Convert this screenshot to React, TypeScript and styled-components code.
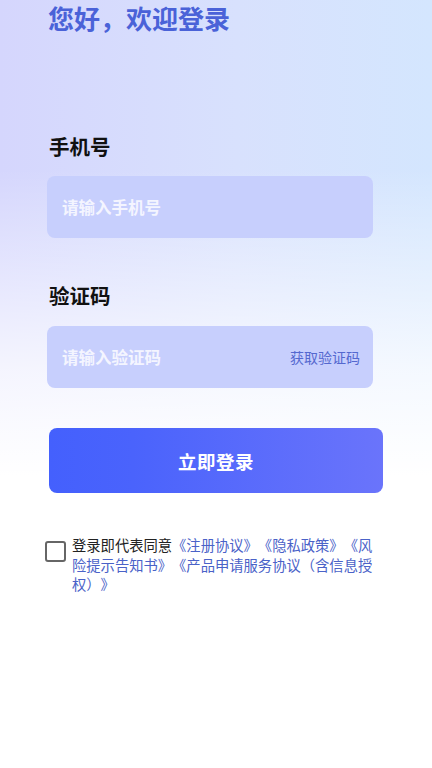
import styled, { createGlobalStyle } from "styled-components";

const GlobalStyle = createGlobalStyle`
  html, body {
    margin: 0;
    padding: 0;
    background: #ffffff;
  }
  body {
    font-family: "Noto Sans CJK SC", "Noto Sans", sans-serif;
    text-spacing-trim: space-all;
  }
`;

const Page = styled.div`
  min-height: 768px;
  width: 432px;
  box-sizing: border-box;
  padding: 1px 0 0 0;
  background:
    linear-gradient(180deg, rgba(255, 255, 255, 0) 0%, rgba(255, 255, 255, 0) 22%, rgba(255, 255, 255, 0.75) 48%, #ffffff 62%),
    linear-gradient(90deg, #d5d6fd 0%, #d8e1fd 55%, #d4e6fe 100%);
  display: flex;
  flex-direction: column;
`;

const Title = styled.h1`
  margin: 0 0 0 48px;
  font-size: 26px;
  line-height: 34px;
  font-weight: 700;
  color: #4a62d8;
`;

const Label = styled.div<{ $top: number }>`
  margin: ${p => p.$top}px 0 0 49px;
  font-size: 20.5px;
  line-height: 28px;
  font-weight: 700;
  color: #111111;
`;

const Field = styled.div<{ $top: number }>`
  margin: ${p => p.$top}px 0 0 47px;
  width: 326px;
  height: 62px;
  box-sizing: border-box;
  padding: 0 13px 0 15px;
  border-radius: 8px;
  background: #c7cffd;
  display: flex;
  align-items: center;
  justify-content: space-between;
`;

const Placeholder = styled.span`
  font-size: 16.5px;
  font-weight: 700;
  color: #f4f5ff;
`;

const CodeLink = styled.span`
  font-size: 14px;
  color: #5468cf;
`;

const LoginButton = styled.button`
  margin: 40px 0 0 49px;
  width: 334px;
  height: 65px;
  border: none;
  border-radius: 8px;
  background: linear-gradient(90deg, #4460fd 0%, #4a63fc 25%, #6a74fb 100%);
  color: #ffffff;
  font-family: inherit;
  font-size: 18.5px;
  font-weight: 700;
  letter-spacing: 0.5px;
`;

const Agreement = styled.div`
  margin: 42px 0 0 45px;
  display: flex;
  align-items: flex-start;
  gap: 6px;
`;

const Checkbox = styled.span`
  flex: none;
  margin-top: 6px;
  width: 21px;
  height: 21px;
  box-sizing: border-box;
  border: 2.5px solid #666666;
  border-radius: 3px;
  background: #ffffff;
`;

const AgreeText = styled.p`
  margin: 0;
  width: 306px;
  font-size: 14.3px;
  line-height: 19.5px;
  color: #222222;
  & a {
    color: #4a62c8;
    text-decoration: none;
  }
`;

export default function App() {
  return (
    <>
      <GlobalStyle />
      <Page>
        <Title>您好，欢迎登录</Title>
        <Label $top={97}>手机号</Label>
        <Field $top={16}>
          <Placeholder>请输入手机号</Placeholder>
        </Field>
        <Label $top={43}>验证码</Label>
        <Field $top={17}>
          <Placeholder>请输入验证码</Placeholder>
          <CodeLink>获取验证码</CodeLink>
        </Field>
        <LoginButton>立即登录</LoginButton>
        <Agreement>
          <Checkbox />
          <AgreeText>
            登录即代表同意<a href="#">《注册协议》</a><a href="#">《隐私政策》</a><a href="#">《风险提示告知书》</a><a href="#">《产品申请服务协议（含信息授权）》</a>
          </AgreeText>
        </Agreement>
      </Page>
    </>
  );
}
